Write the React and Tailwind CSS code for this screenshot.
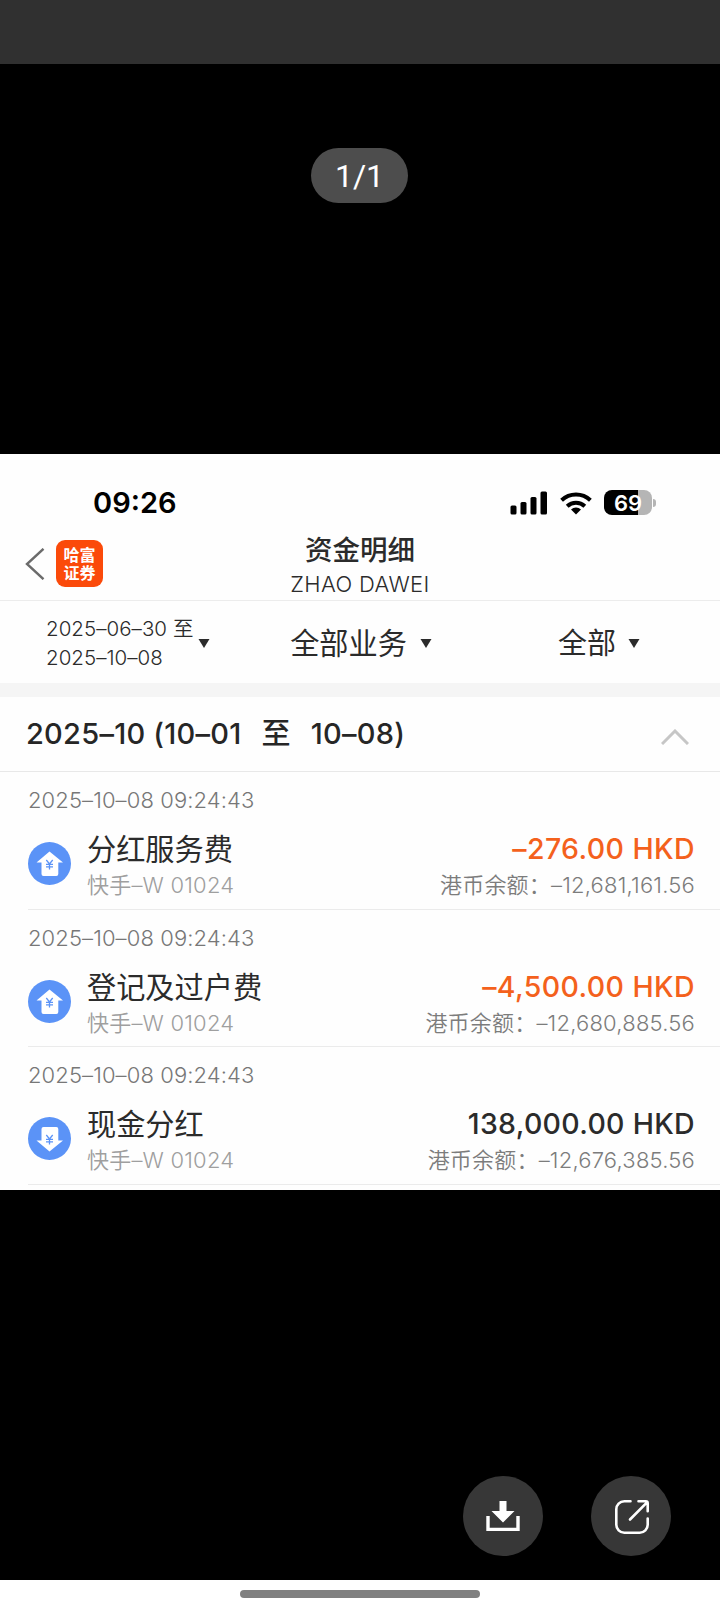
const records = [
  {
    id: 1,
    time: '2025–10–08 09:24:43',
    name: '分红服务费',
    stock: '快手–W 01024',
    amount: '–276.00 HKD',
    balance: '–12,681,161.56',
    type: 'out',
  },
  {
    id: 2,
    time: '2025–10–08 09:24:43',
    name: '登记及过户费',
    stock: '快手–W 01024',
    amount: '–4,500.00 HKD',
    balance: '–12,680,885.56',
    type: 'out',
  },
  {
    id: 3,
    time: '2025–10–08 09:24:43',
    name: '现金分红',
    stock: '快手–W 01024',
    amount: '138,000.00 HKD',
    balance: '–12,676,385.56',
    type: 'in',
  },
];

const Caret = () => (
  <svg className="w-3 h-[9px] shrink-0" viewBox="0 0 12 9" fill="#2b2b2b">
    <path d="M0.5 0h11L6 9z" />
  </svg>
);

const FlowIcon = ({ type }) => (
  <svg className="-mt-[3px] w-[43px] h-[43px] shrink-0" viewBox="0 0 43 43">
    <circle cx="21.5" cy="21.5" r="21.5" fill="#5b93f7" />
    <path
      d="M21.5 9.5L35 20.5H30.3V32a2 2 0 0 1-2 2H15.5a2 2 0 0 1-2-2V20.5H8.5z"
      fill="#fff"
      transform={type === 'in' ? 'matrix(1 0 0 -1 0 44)' : undefined}
    />
    <path
      d="M18.3 18l3.2 4 3.2-4M18 22.3h7M18 24.9h7M21.5 22v5.6"
      fill="none"
      stroke="#5b93f7"
      strokeWidth="1.3"
    />
  </svg>
);

const StatusBar = () => (
  <div className="flex h-[76px] items-center justify-between pt-[21px] pl-[93px] pr-16">
    <span className="text-[29px] leading-none font-semibold text-black">09:26</span>
    <div className="flex items-center gap-[12px]">
      <svg className="w-[38px] h-6" viewBox="0 0 38 24" fill="#000">
        <rect x="0.5" y="14.5" width="6" height="9" rx="1.5" />
        <rect x="10.5" y="11" width="6" height="12.5" rx="1.5" />
        <rect x="20.5" y="6" width="6" height="17.5" rx="1.5" />
        <rect x="30.5" y="0.5" width="6.5" height="23" rx="1.5" />
      </svg>
      <svg className="w-8 h-6" viewBox="0 0 32 24" fill="none" stroke="#000" strokeWidth="4">
        <path d="M1.6 9.2a21 21 0 0 1 28.8 0" />
        <path d="M7.2 15.2a12.8 12.8 0 0 1 17.6 0" />
        <path d="M16 23.5l-5-4.9a7.2 7.2 0 0 1 10 0z" fill="#000" stroke="none" />
      </svg>
      <div className="flex items-center gap-px">
        <div className="flex h-[25px] w-12 items-center justify-center rounded-[8px] bg-linear-to-r from-black from-70% to-[#b5b5b5] to-70%">
          <span className="text-[22px] leading-none font-semibold text-white">69</span>
        </div>
        <div className="h-2 w-[3px] rounded-r-full bg-[#b5b5b5]" />
      </div>
    </div>
  </div>
);

const Header = () => (
  <div className="grid h-[71px] grid-cols-[1fr_auto_1fr] items-center border-b border-[#ececec]">
    <div className="flex items-center gap-[11px] pb-[3px] pl-[25px]">
      <svg className="w-5 h-8" viewBox="0 0 20 32" fill="none" stroke="#6b6b6b" strokeWidth="2.4">
        <path d="M18.5 0.8L2 16l16.5 15.2" />
      </svg>
      <div className="flex size-[47px] flex-col items-center justify-center rounded-[9px] bg-[#fb4a0a] text-[16px] leading-[18px] font-bold text-white">
        <span>哈富</span>
        <span>证券</span>
      </div>
    </div>
    <div className="flex flex-col items-center text-[#2b2b2b]">
      <h1 className="text-[27.5px] leading-[38px] font-medium">资金明细</h1>
      <span className="text-[22px] leading-[31px] font-[350] tracking-[0.35px]">ZHAO DAWEI</span>
    </div>
  </div>
);

const Filters = () => (
  <div className="flex h-[82px] items-center pt-[3px] text-[#2b2b2b]">
    <button type="button" className="flex w-[244px] items-center gap-[5px] pl-[46px] text-left">
      <span className="text-[20.5px] leading-[28.5px] font-[350] tracking-[0.05px]">
        2025–06–30 至
        <br />
        2025–10–08
      </span>
      <Caret />
    </button>
    <button type="button" className="flex w-[234px] items-center justify-center gap-[13px]">
      <span className="text-[29.2px] leading-10">全部业务</span>
      <Caret />
    </button>
    <button type="button" className="flex flex-1 items-center justify-center gap-[12px]">
      <span className="text-[29px] leading-10">全部</span>
      <Caret />
    </button>
  </div>
);

const RecordRow = ({ record }) => (
  <div className="ml-[28px] h-[137.5px] border-b border-[#ebebeb] pt-[13px] pr-[25px]">
    <div className="text-[22px] leading-[30px] font-[350] tracking-[0.1px] text-[#777]">
      {record.time}
    </div>
    <div className="mt-[14px] flex items-center">
      <FlowIcon type={record.type} />
      <div className="ml-[16px] flex flex-col">
        <span className="pt-px text-[29.2px] leading-[39px] text-[#2b2b2b]">{record.name}</span>
        <span className="text-[22px] leading-8 font-[350] tracking-[0.2px] text-[#9f9f9f]">
          {record.stock}
        </span>
      </div>
      <div className="ml-auto flex flex-col items-end">
        <span
          className={
            record.type === 'out'
              ? 'text-[28.5px] leading-10 font-[450] tracking-[0.4px] text-[#f4611c]'
              : 'text-[28.5px] leading-10 font-[450] tracking-[0.3px] text-[#2b2b2b]'
          }
        >
          {record.amount}
        </span>
        <span className="text-[22px] leading-8 font-[350] tracking-[0.2px] text-[#7c7c7c]">
          港币余额：{record.balance}
        </span>
      </div>
    </div>
  </div>
);

const Statement = () => (
  <div className="h-[736px] overflow-hidden bg-[#fefefe]">
    <StatusBar />
    <Header />
    <Filters />
    <div className="h-[14px] bg-[#f5f5f5]" />
    <div className="flex h-[75px] items-center justify-between border-b border-[#e8e8e8] pl-[26px] pr-[31px]">
      <h2 className="text-[29px] font-medium tracking-[0.25px] whitespace-pre text-[#262626]">
        2025–10 (10–01<span className="px-1">  至  </span>10–08)
      </h2>
      <svg className="mt-[5px] w-7 h-4" viewBox="0 0 28 16" fill="none" stroke="#c6c6c6" strokeWidth="3">
        <path d="M1 15L14 2l13 13" />
      </svg>
    </div>
    {records.map((record) => (
      <RecordRow key={record.id} record={record} />
    ))}
  </div>
);

const App = () => (
  <div className="flex h-[1612px] w-[720px] flex-col bg-black font-['Inter','Noto_Sans_CJK_SC',sans-serif]">
    <div className="h-16 bg-[#303030]" />
    <div className="flex h-[390px] justify-center pt-[84px] pr-px">
      <span className="flex h-[55px] w-[97px] items-center justify-center rounded-full bg-[#4d4d4d] font-['Roboto',sans-serif] text-[32px] text-white">
        1/1
      </span>
    </div>
    <Statement />
    <div className="flex flex-1 items-start justify-end gap-12 pt-[286px] pr-[49px]">
      <button type="button" className="flex size-20 items-center justify-center rounded-full bg-[#373737]">
        <svg className="w-[34px] h-[30px]" viewBox="0 0 34 30">
          <path d="M13.5 0h7v10H28.5L17 21.5 5.5 10h8z" fill="#fff" />
          <path d="M2 15v13.5h30V15" fill="none" stroke="#fff" strokeWidth="3.4" />
        </svg>
      </button>
      <button type="button" className="flex size-20 items-center justify-center rounded-full bg-[#373737]">
        <svg
          className="mt-0.5 ml-0.5 w-[34px] h-[34px]"
          viewBox="0 0 34 34"
          fill="none"
          stroke="#fff"
          strokeWidth="2.6"
          strokeLinecap="round"
          strokeLinejoin="round"
        >
          <path d="M15.5 1.3H9.3a8 8 0 0 0-8 8v15.4a8 8 0 0 0 8 8h15.4a8 8 0 0 0 8-8V18.5" />
          <path d="M23.5 1.3h7.2a2 2 0 0 1 2 2v8M31.5 2.8L15 19.5" />
        </svg>
      </button>
    </div>
    <div className="flex h-8 justify-center bg-white pt-[10px]">
      <div className="h-2 w-60 rounded-full bg-[#808080]" />
    </div>
  </div>
);

export default App;
